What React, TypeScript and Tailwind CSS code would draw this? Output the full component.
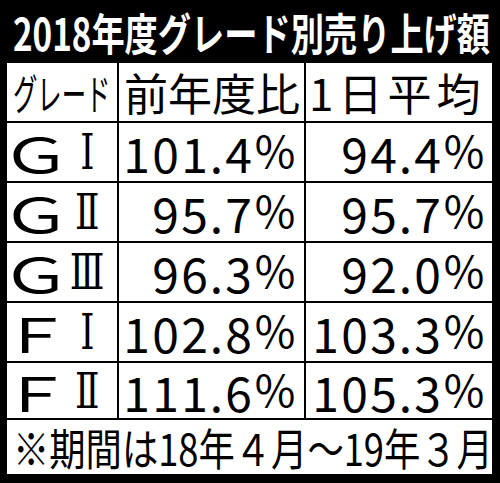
const rows = [
  { g: "Ｇ", n: "Ⅰ", a: "101.4%", b: "94.4%" },
  { g: "Ｇ", n: "Ⅱ", a: "95.7%", b: "95.7%" },
  { g: "Ｇ", n: "Ⅲ", a: "96.3%", b: "92.0%" },
  { g: "Ｆ", n: "Ⅰ", a: "102.8%", b: "103.3%" },
  { g: "Ｆ", n: "Ⅱ", a: "111.6%", b: "105.3%" },
];

function Num({ v }: { v: string }) {
  return (
    <span className="flex text-[48px] leading-none">
      {v.split("").map((c, i) => (
        <span
          key={i}
          className={
            c === "."
              ? "w-[15px] text-center"
              : c === "%"
              ? "w-[42px] text-center text-[44px]"
              : "w-[29px] text-center"
          }
        >
          {c === "%" ? "％" : c}
        </span>
      ))}
    </span>
  );
}

export default function App() {
  return (
    <div className="w-[500px] h-[483px] bg-black font-['Noto_Sans_CJK_JP',sans-serif] text-black">
      <div className="h-[63px] pl-[13px] flex items-center">
        <span className="inline-block origin-left scale-x-[0.755] whitespace-nowrap text-[44px] font-bold text-white leading-none">
          2018年度グレード別売り上げ額
        </span>
      </div>
      <div className="ml-[7px] w-[485px] grid grid-cols-[110px_185px_186px] grid-rows-[58px_58px_58px_58px_58px_55px_54px] gap-[2px]">
        <div className="bg-white flex items-center pl-[6px]">
          <span className="inline-block origin-left scale-x-[0.58] whitespace-nowrap text-[42px] leading-none">
            グレード
          </span>
        </div>
        <div className="bg-white flex items-center pl-[5px] text-[44px] leading-none">
          前年度比
        </div>
        <div className="bg-white flex items-center pl-[3px] text-[44px] leading-none tracking-[5px] whitespace-nowrap">
          1日平均
        </div>

        {rows.map((r, i) => (
          <div key={i} className="contents">
            <div className="bg-white flex items-center pl-[6px] leading-none">
              <span className="w-[45px] flex justify-center">
                <span className="inline-block scale-x-[1.45] text-[48px]">{r.g}</span>
              </span>
              <span className="flex-1 flex justify-center">
                <span className="inline-block scale-x-[0.75] font-['DejaVu_Serif',serif] text-[48px]">
                  {r.n}
                </span>
              </span>
            </div>
            <div className="bg-white flex items-center justify-end pr-[9px]">
              <Num v={r.a} />
            </div>
            <div className="bg-white flex items-center justify-end pr-[8px]">
              <Num v={r.b} />
            </div>
          </div>
        ))}

        <div className="col-span-3 bg-white flex items-center pl-[6px]">
          <span className="inline-block origin-left scale-x-[0.825] whitespace-nowrap text-[44px] leading-none">
            ※期間は18年４月～19年３月
          </span>
        </div>
      </div>
    </div>
  );
}
